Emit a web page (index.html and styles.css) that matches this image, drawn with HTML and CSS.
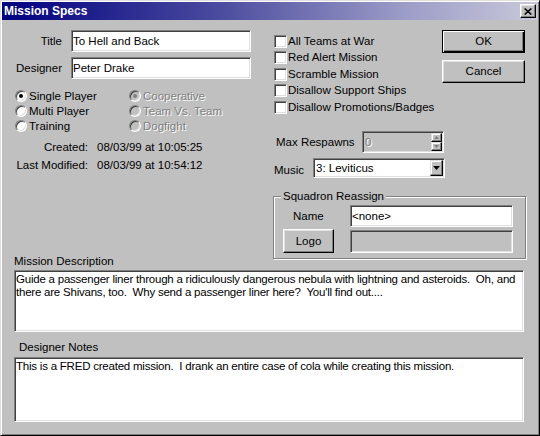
FILE: index.html
```html
<!DOCTYPE html>
<html lang="en">
<head>
    <meta charset="UTF-8">
    <title>Mission Specs</title>
    <link rel="stylesheet" href="styles.css">
</head>
<body>
<div class="window">
    <div class="titlebar">
        <span class="titlebar__text">Mission Specs</span>
        <span class="titlebar__close">
            <svg width="8" height="7" viewBox="0 0 8 7"><path d="M0.6 0.5L7.4 6.5M7.4 0.5L0.6 6.5" stroke="#000" stroke-width="1.6"/></svg>
        </span>
    </div>
    <div class="dialog">
        <div class="top">
            <div class="col-left">
                <div class="fields">
                    <span class="fields__label">Title</span>
                    <div class="edit">To Hell and Back</div>
                    <span class="fields__label">Designer</span>
                    <div class="edit">Peter Drake</div>
                </div>
                <div class="radios">
                    <div class="opt"><span class="radio is-checked"></span>Single Player</div>
                    <div class="opt is-disabled"><span class="radio is-checked"></span>Cooperative</div>
                    <div class="opt"><span class="radio"></span>Multi Player</div>
                    <div class="opt is-disabled"><span class="radio"></span>Team Vs. Team</div>
                    <div class="opt"><span class="radio"></span>Training</div>
                    <div class="opt is-disabled"><span class="radio"></span>Dogfight</div>
                </div>
                <div class="dates">
                    <span class="dates__label">Created:</span><span>08/03/99 at 10:05:25</span>
                    <span class="dates__label">Last Modified:</span><span>08/03/99 at 10:54:12</span>
                </div>
                <div class="caption caption--desc">Mission Description</div>
            </div>
            <div class="col-right">
                <div class="flags-row">
                    <div class="flags">
                        <div class="opt"><span class="check"></span>All Teams at War</div>
                        <div class="opt"><span class="check"></span>Red Alert Mission</div>
                        <div class="opt"><span class="check"></span>Scramble Mission</div>
                        <div class="opt"><span class="check"></span>Disallow Support Ships</div>
                        <div class="opt"><span class="check"></span>Disallow Promotions/Badges</div>
                    </div>
                    <div class="buttons">
                        <div class="btn btn--default">OK</div>
                        <div class="btn">Cancel</div>
                    </div>
                </div>
                <div class="respawn">
                    <span class="respawn__label">Max Respawns</span>
                    <div class="spin">
                        <span class="spin__value">0</span>
                        <span class="spin__btns">
                            <span class="spin__btn"><svg width="5" height="3" viewBox="0 0 5 3"><path d="M2.5 0L5 3H0z" fill="#808080"/></svg></span>
                            <span class="spin__btn"><svg width="5" height="3" viewBox="0 0 5 3"><path d="M0 0H5L2.5 3z" fill="#808080"/></svg></span>
                        </span>
                    </div>
                </div>
                <div class="music">
                    <span class="music__label">Music</span>
                    <div class="combo">
                        <span class="combo__value">3: Leviticus</span>
                        <span class="combo__btn"><svg width="7" height="4" viewBox="0 0 7 4"><path d="M0 0H7L3.5 4z" fill="#000"/></svg></span>
                    </div>
                </div>
                <fieldset class="group">
                    <legend class="group__legend">Squadron Reassign</legend>
                    <div class="reassign">
                        <span class="reassign__label">Name</span>
                        <div class="edit">&lt;none&gt;</div>
                    </div>
                    <div class="reassign reassign--logo">
                        <div class="btn btn--logo">Logo</div>
                        <div class="edit edit--disabled"></div>
                    </div>
                </fieldset>
            </div>
        </div>
        <div class="memo memo--desc">Guide a passenger liner through a ridiculously dangerous nebula with lightning and asteroids.  Oh, and
there are Shivans, too.  Why send a passenger liner here?  You'll find out....</div>
        <div class="caption caption--notes">Designer Notes</div>
        <div class="memo memo--notes">This is a FRED created mission.  I drank an entire case of cola while creating this mission.</div>
    </div>
</div>
</body>
</html>
```

FILE: styles.css
```css
* {
    box-sizing: border-box;
}
body {
    margin: 0;
    font-family: "Liberation Sans", Arial, sans-serif;
    font-size: 11.5px;
    line-height: 13px;
    color: #000;
    background: #c0c0c0;
}

/* window frame */
.window {
    width: 540px;
    height: 436px;
    padding: 1px;
    background: #c0c0c0;
    border: 1px solid;
    border-color: #dfdfdf #000 #000 #dfdfdf;
    box-shadow: inset 1px 1px #fff, inset -1px -1px #808080;
}
.titlebar {
    height: 18px;
    display: flex;
    align-items: center;
    padding: 0 2px 0 2px;
    background: linear-gradient(to right, #000080 0%, #4a4a9e 40%, #9c9cc8 75%, #c8c8da 100%);
    color: #fff;
    font-size: 12px;
    font-weight: bold;
}
.titlebar__close {
    margin-left: auto;
    width: 16px;
    height: 14px;
    display: flex;
    align-items: center;
    justify-content: center;
    background: #c0c0c0;
    border: 1px solid;
    border-color: #fff #000 #000 #fff;
    box-shadow: inset -1px -1px #808080, inset 1px 1px #dfdfdf;
}

.dialog {
    padding: 10px 12px 0 12px;
}
.top {
    display: flex;
}
.col-left {
    width: 259px;
}
.col-right {
    width: 253px;
}

/* shared controls */
.edit {
    height: 22px;
    line-height: 20px;
    padding: 0 1px;
    background: #fff;
    white-space: nowrap;
    border: 1px solid;
    border-color: #808080 #fff #fff #808080;
    box-shadow: inset 1px 1px #404040, inset -1px -1px #dfdfdf;
}
.edit--disabled {
    background: #c0c0c0;
}
.btn {
    height: 23px;
    display: flex;
    align-items: center;
    justify-content: center;
    background: #c0c0c0;
    border: 1px solid;
    border-color: #fff #000 #000 #fff;
    box-shadow: inset -1px -1px #808080, inset 1px 1px #dfdfdf;
}
.btn--default {
    border-color: #000;
    box-shadow: inset 1px 1px #fff, inset -1px -1px #000, inset -2px -2px #808080;
}
.opt {
    display: flex;
    align-items: center;
    white-space: nowrap;
}
.opt.is-disabled {
    color: #808080;
    text-shadow: 1px 1px #fff;
}
.radio {
    position: relative;
    flex: none;
    width: 12px;
    height: 12px;
    margin-right: 2px;
    border-radius: 50%;
    background: #fff;
    border: 1px solid;
    border-color: #808080 #fff #fff #808080;
    box-shadow: inset 1px 1px #404040, inset -1px -1px #dfdfdf;
}
.radio.is-checked:after {
    content: "";
    position: absolute;
    left: 3px;
    top: 3px;
    width: 4px;
    height: 4px;
    border-radius: 50%;
    background: #000;
}
.is-disabled .radio {
    background: #c0c0c0;
}
.is-disabled .radio.is-checked:after {
    background: #808080;
}
.check {
    flex: none;
    width: 13px;
    height: 13px;
    margin-right: 1px;
    background: #fff;
    border: 1px solid;
    border-color: #808080 #fff #fff #808080;
    box-shadow: inset 1px 1px #404040, inset -1px -1px #dfdfdf;
}

/* left column */
.fields {
    display: grid;
    grid-template-columns: 48px 180px;
    column-gap: 9px;
    row-gap: 5px;
}
.fields__label {
    text-align: right;
    line-height: 22px;
}
.radios {
    display: grid;
    grid-template-columns: 114px auto;
    grid-auto-rows: 15px;
    margin-top: 9.5px;
    padding-left: 1px;
}
.dates {
    display: grid;
    grid-template-columns: 74px auto;
    column-gap: 9px;
    grid-auto-rows: 18px;
    align-items: center;
    margin-top: 4.5px;
}
.dates__label {
    text-align: right;
}
.caption--desc {
    margin-top: 80.5px;
}

/* right column */
.flags-row {
    display: flex;
    align-items: flex-start;
}
.flags {
    width: 169px;
    margin-top: 2.75px;
    padding-left: 1px;
}
.flags .opt {
    height: 16.5px;
}
.buttons {
    width: 83px;
    display: flex;
    flex-direction: column;
    gap: 7px;
}
.respawn {
    display: flex;
    align-items: center;
    height: 22px;
    margin-top: 15.75px;
    padding-left: 3px;
}
.respawn__label {
    width: 86px;
}
.spin {
    width: 82px;
    height: 22px;
    display: flex;
    background: #c0c0c0;
    border: 1px solid;
    border-color: #808080 #fff #fff #808080;
    box-shadow: inset 1px 1px #404040, inset -1px -1px #dfdfdf;
}
.spin__value {
    padding-left: 2px;
    line-height: 20px;
    color: #808080;
    text-shadow: 1px 1px #fff;
}
.spin__btns {
    margin: 1px 1px 1px auto;
    width: 11px;
    display: flex;
    flex-direction: column;
}
.spin__btn {
    flex: 1;
    display: flex;
    align-items: center;
    justify-content: center;
    background: #c0c0c0;
    border: 1px solid;
    border-color: #dfdfdf #000 #000 #dfdfdf;
    box-shadow: inset -1px -1px #808080, inset 1px 1px #fff;
}
.music {
    display: flex;
    align-items: center;
    height: 20px;
    margin-top: 5px;
    padding-left: 1px;
}
.music__label {
    width: 39px;
    padding-top: 4px;
}
.combo {
    width: 132px;
    height: 20px;
    display: flex;
    align-items: center;
    background: #fff;
    border: 1px solid;
    border-color: #808080 #fff #fff #808080;
    box-shadow: inset 1px 1px #404040, inset -1px -1px #dfdfdf;
}
.combo__value {
    padding-left: 2px;
}
.combo__btn {
    margin: 1px 1px 1px auto;
    width: 13px;
    height: 16px;
    display: flex;
    align-items: center;
    justify-content: center;
    background: #c0c0c0;
    border: 1px solid;
    border-color: #dfdfdf #000 #000 #dfdfdf;
    box-shadow: inset -1px -1px #808080, inset 1px 1px #fff;
}
.group {
    margin: 11.5px 0 0 0;
    padding: 2.5px 12px 5px 9px;
    min-inline-size: 0;
    border: 1px solid #808080;
    box-shadow: inset 1px 1px #fff, 1px 1px #fff;
}
.group__legend {
    margin-left: -2px;
    padding: 0 2px;
    line-height: 13px;
    background: #c0c0c0;
}
.reassign {
    display: grid;
    grid-template-columns: 67px 163px;
    align-items: center;
}
.reassign__label {
    padding-left: 10px;
}
.reassign--logo {
    margin-top: 2px;
}
.btn--logo {
    width: 51px;
    height: 24px;
}
.reassign--logo .edit {
    height: 23px;
}

/* bottom memos */
.memo {
    width: 510px;
    padding: 1.5px 1px 0 1px;
    overflow: hidden;
    background: #fff;
    white-space: pre;
    letter-spacing: -0.22px;
    border: 1px solid;
    border-color: #808080 #fff #fff #808080;
    box-shadow: inset 1px 1px #404040, inset -1px -1px #dfdfdf;
}
.memo--desc {
    height: 62px;
    margin-top: 2.5px;
}
.caption--notes {
    margin-top: 8.5px;
    padding-left: 5px;
}
.memo--notes {
    height: 65px;
    margin-top: 3.5px;
}
```
